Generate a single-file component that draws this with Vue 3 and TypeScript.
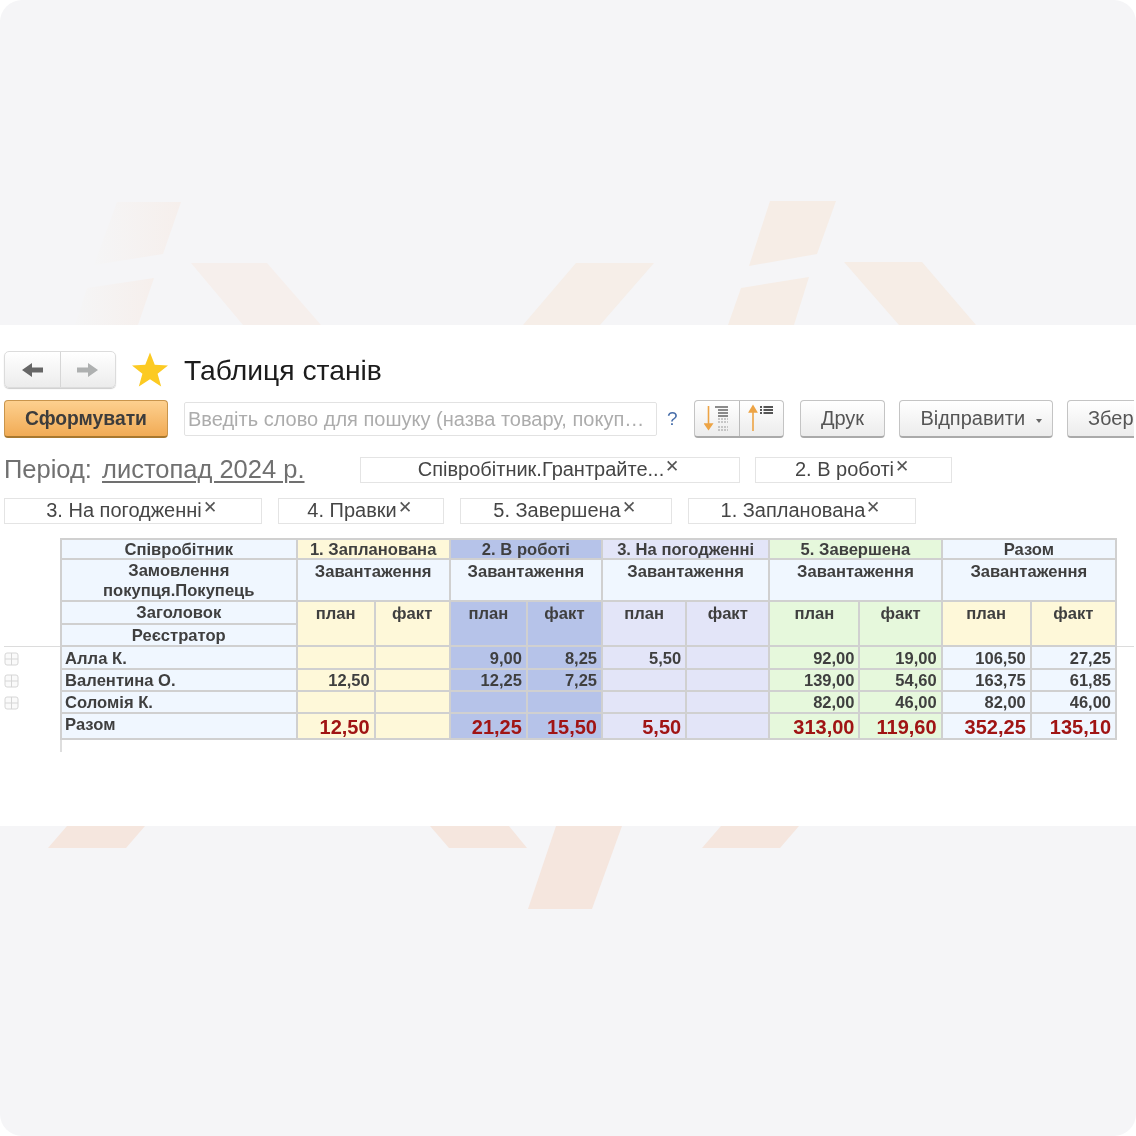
<script setup lang="ts">
const backShapes: { points: string; fill: string }[] = [
  { points: '117,202 181,202 163,254 94,265', fill: 'url(#fade)' },
  { points: '87,288 154,278 138,325 75,325', fill: 'url(#fade)' },
  { points: '191,263 267,263 321,325 243,325', fill: '#f6efec' },
  { points: '576,263 654,263 600,325 523,325', fill: '#f6eee8' },
  { points: '770,201 836,201 817,254 749,266', fill: '#f6ede6' },
  { points: '741,288 809,277 794,325 728,325', fill: '#f6ede6' },
  { points: '844,262 922,262 976,325 899,325', fill: '#f6ede6' },
  { points: '67,826 145,826 126,848 48,848', fill: '#f5e6de' },
  { points: '430,826 509,826 527,848 449,848', fill: '#f5e6de' },
  { points: '556,826 622,826 592,909 528,909', fill: '#f5e6de' },
  { points: '721,826 799,826 780,848 702,848', fill: '#f5e6de' },
]

const tagsTop = ['Співробітник.Грантрайте...', '2. В роботі']
const tagsBottom = ['3. На погодженні', '4. Правки', '5. Завершена', '1. Запланована']

const groups = [
  { title: '1. Запланована', tone: 'yellow' },
  { title: '2. В роботі', tone: 'blue' },
  { title: '3. На погодженні', tone: 'lilac' },
  { title: '5. Завершена', tone: 'green' },
  { title: 'Разом', tone: 'sky' },
]

const widths = [60, 237, 78, 75, 77, 75, 84, 83, 90, 82, 89, 85]
const tones = ['yellow', 'yellow', 'blue', 'blue', 'lilac', 'lilac', 'green', 'green', 'sky', 'sky']
const headTones = ['yellow', 'blue', 'lilac', 'green', 'yellow']

const rows = [
  { name: 'Алла К.', values: ['', '', '9,00', '8,25', '5,50', '', '92,00', '19,00', '106,50', '27,25'] },
  { name: 'Валентина О.', values: ['12,50', '', '12,25', '7,25', '', '', '139,00', '54,60', '163,75', '61,85'] },
  { name: 'Соломія К.', values: ['', '', '', '', '', '', '82,00', '46,00', '82,00', '46,00'] },
]
const totals = ['12,50', '', '21,25', '15,50', '5,50', '', '313,00', '119,60', '352,25', '135,10']
</script>

<template>
  <main class="page">
    <svg class="backdrop" width="1136" height="1136" viewBox="0 0 1136 1136" aria-hidden="true">
      <defs>
        <linearGradient id="fade" x1="0" y1="0" x2="1" y2="0">
          <stop offset="0" stop-color="#f5f5f6" />
          <stop offset="1" stop-color="#f6efec" />
        </linearGradient>
      </defs>
      <polygon v-for="shape in backShapes" :key="shape.points" :points="shape.points" :fill="shape.fill" />
    </svg>

    <section class="band">
      <div class="shot">
        <header class="title-row">
          <div class="nav">
            <button class="nav-btn">
              <svg width="21" height="14" viewBox="0 0 21 14"><path d="M0 7 10 0v4.500h11v5H10V14z" fill="#666" /></svg>
            </button>
            <button class="nav-btn">
              <svg width="21" height="14" viewBox="0 0 21 14"><path d="M21 7 11 0v4.500H0v5h11V14z" fill="#aeb0b0" /></svg>
            </button>
          </div>
          <svg class="star" width="36" height="35" viewBox="0 0 38 36"><path d="m19 0 5 13 14 .7-11 8.800 3.800 13.500L19 28.200 7.200 36 11 22.500 0 13.700 14 13z" fill="#fcca22" /></svg>
          <h1 class="title">Таблиця станів</h1>
        </header>

        <div class="toolbar">
          <button class="btn primary">Сформувати</button>
          <div class="search">Введіть слово для пошуку (назва товару, покуп…</div>
          <span class="help">?</span>
          <div class="sort-group">
            <button class="sort-btn">
              <svg width="26" height="30" viewBox="0 0 26 30">
                <path d="M4.500 3v22M1 21l3.500 5L8 21z" stroke="#eda445" stroke-width="1.600" fill="#eda445" />
                <path d="M11 4h13M14 7h10M14 10h10M14 13h10" stroke="#666" stroke-width="1.500" />
                <path d="M14 16h10M14 19h10M14 24h10M14 27h10" stroke="#999" stroke-width="1.200" stroke-dasharray="2 1" />
              </svg>
            </button>
            <button class="sort-btn">
              <svg width="26" height="30" viewBox="0 0 26 30">
                <path d="M5 28V5M1.500 9 5 3l3.500 6z" stroke="#eda445" stroke-width="1.600" fill="#eda445" />
                <path d="M12 4h2M12 7h2M12 10h2" stroke="#555" stroke-width="1.800" />
                <path d="M15.500 4H25M15.500 7H25M15.500 10H25" stroke="#555" stroke-width="1.800" />
              </svg>
            </button>
          </div>
          <button class="btn print">Друк</button>
          <button class="btn send">Відправити <span class="caret"></span></button>
          <button class="btn save">Зберегти</button>
        </div>

        <div class="filters first">
          <div class="period">Період: <a class="period-link">листопад 2024 р.</a></div>
          <div v-for="(tag, i) in tagsTop" :key="tag" class="tag" :class="'top-' + i">
            {{ tag }}<span class="close">✕</span>
          </div>
        </div>

        <div class="filters second">
          <div v-for="(tag, i) in tagsBottom" :key="tag" class="tag" :class="'bottom-' + i">
            {{ tag }}<span class="close">✕</span>
          </div>
        </div>

        <div class="table-wrap">
          <div class="hline"></div>
          <table class="report">
            <colgroup>
              <col v-for="(w, i) in widths" :key="i" :style="{ width: w + 'px' }" />
            </colgroup>
            <tbody>
              <tr class="r-22 top">
                <td class="gutter" rowspan="4"></td>
                <th class="sky first-col">Співробітник</th>
                <th v-for="g in groups" :key="g.title" colspan="2" :class="g.tone">{{ g.title }}</th>
              </tr>
              <tr class="r-42">
                <th class="sky first-col two-line">Замовлення<br />покупця.Покупець</th>
                <th v-for="g in groups" :key="g.title" colspan="2" class="sky load">Завантаження</th>
              </tr>
              <tr class="r-23">
                <th class="sky first-col">Заголовок</th>
                <template v-for="tone in headTones" :key="tone">
                  <th rowspan="2" class="measure" :class="tone">план</th>
                  <th rowspan="2" class="measure" :class="tone">факт</th>
                </template>
              </tr>
              <tr class="r-22">
                <th class="sky first-col">Реєстратор</th>
              </tr>
              <tr v-for="(row, r) in rows" :key="row.name" :class="r === 0 ? 'r-23' : 'r-22'">
                <td class="gutter expander">
                  <svg width="15" height="14" viewBox="0 0 15 14">
                    <rect x="1" y="1" width="13" height="12" rx="2" fill="#fafafa" stroke="#d6d6d6" />
                    <path d="M7.500 1v12M1 7h13" stroke="#d6d6d6" />
                  </svg>
                </td>
                <td class="sky first-col name">{{ row.name }}</td>
                <td v-for="(v, c) in row.values" :key="c" class="num" :class="tones[c]">{{ v }}</td>
              </tr>
              <tr class="r-26">
                <td class="gutter"></td>
                <td class="sky first-col name total-name">Разом</td>
                <td v-for="(v, c) in totals" :key="c" class="num total" :class="tones[c]">{{ v }}</td>
              </tr>
              <tr class="r-12">
                <td class="gutter"></td>
                <td class="stub" colspan="11"></td>
              </tr>
            </tbody>
          </table>
        </div>
      </div>
    </section>
  </main>
</template>

<style>
html,
body {
  background: #ffffff;
}
</style>

<style scoped>
.page {
  position: relative;
  width: 1136px;
  height: 1136px;
  padding-top: 325px;
  box-sizing: border-box;
  background: #f5f5f7;
  border-radius: 22px;
  overflow: hidden;
  font-family: "Liberation Sans", Arial, sans-serif;
}

.backdrop {
  position: absolute;
  left: 0;
  top: 0;
}

.band {
  position: relative;
  height: 501px;
  background: #fff;
}

.shot {
  width: 1134px;
  height: 501px;
  overflow: hidden;
  padding: 26px 0 0 4px;
  box-sizing: border-box;
  filter: blur(0.35px);
}

.title-row {
  display: flex;
  align-items: center;
  height: 37px;
}

.nav {
  display: flex;
  width: 112px;
  height: 37px;
  border: 1px solid #dcdcdc;
  border-radius: 5px;
  box-sizing: border-box;
  background: linear-gradient(#ffffff, #ececec);
  box-shadow: 0 1px 1px #ccc;
}

.nav-btn {
  flex: 1;
  display: flex;
  align-items: center;
  justify-content: center;
  padding: 0;
  border: 0;
  background: none;
}

.nav-btn + .nav-btn {
  border-left: 1px solid #d6d6d6;
}

.star {
  margin-left: 16px;
}

.title {
  margin: 2px 0 0 16px;
  font-size: 28.300px;
  font-weight: 400;
  color: #1c1c1c;
}

.toolbar {
  display: flex;
  align-items: center;
  height: 38px;
  margin-top: 12px;
}

.btn {
  height: 38px;
  padding: 0;
  border: 1px solid #c4c4c4;
  border-bottom: 2px solid #aaa;
  border-radius: 4px;
  background: linear-gradient(#ffffff, #ececec);
  box-sizing: border-box;
  font: 400 20px "Liberation Sans", Arial, sans-serif;
  color: #555;
  flex: none;
}

.primary {
  width: 164px;
  border-color: #c9954c;
  border-bottom-color: #a8782f;
  background: linear-gradient(#fdd08f, #f1ab55);
  font-size: 19.300px;
  font-weight: 700;
  color: #3c3c3c;
}

.search {
  flex: none;
  width: 473px;
  height: 34px;
  margin-left: 16px;
  padding-left: 3px;
  border: 1px solid #e2e2e2;
  border-radius: 2px;
  box-sizing: border-box;
  font-size: 20px;
  line-height: 32px;
  color: #acacac;
  white-space: nowrap;
  overflow: hidden;
}

.help {
  flex: none;
  width: 37px;
  padding-left: 10px;
  box-sizing: border-box;
  font-size: 19px;
  color: #4a70ab;
}

.sort-group {
  flex: none;
  display: flex;
  width: 90px;
  height: 38px;
  border: 1px solid #c4c4c4;
  border-bottom: 2px solid #aaa;
  border-radius: 4px;
  box-sizing: border-box;
  background: linear-gradient(#ffffff, #ececec);
}

.sort-btn {
  flex: 1;
  display: flex;
  justify-content: center;
  padding: 2px 0 0;
  border: 0;
  background: none;
}

.sort-btn + .sort-btn {
  border-left: 1px solid #bbb;
}

.print {
  width: 85px;
  margin-left: 16px;
}

.send {
  width: 154px;
  margin-left: 14px;
  padding-left: 10px;
}

.caret {
  display: inline-block;
  margin-left: 5px;
  vertical-align: 2px;
  border: 3.500px solid transparent;
  border-top: 4px solid #666;
  border-bottom: 0;
}

.save {
  width: 140px;
  margin-left: 14px;
  text-align: left;
  padding-left: 20px;
}

.filters {
  display: flex;
  height: 26px;
}

.first {
  margin-top: 19px;
}

.second {
  margin-top: 15px;
  gap: 16px;
}

.period {
  width: 356px;
  font-size: 25.500px;
  line-height: 25px;
  color: #707070;
  white-space: nowrap;
}

.period-link {
  margin-left: 3px;
  text-decoration: underline;
  text-underline-offset: 3px;
  text-decoration-thickness: 1.500px;
}

.tag {
  display: flex;
  align-items: center;
  justify-content: center;
  height: 26px;
  padding: 0 3px 2px 0;
  border: 1px solid #e4e4e4;
  box-sizing: border-box;
  font-size: 20px;
  color: #454545;
  white-space: pre;
}

.top-0 {
  width: 380px;
}

.top-1 {
  width: 197px;
  margin-left: 15px;
}

.bottom-0 {
  width: 258px;
}

.bottom-1 {
  width: 166px;
}

.bottom-2 {
  width: 212px;
}

.bottom-3 {
  width: 228px;
}

.close {
  margin: -4px 0 0 1px;
  font-size: 17px;
  line-height: 16px;
  color: #555;
}

.table-wrap {
  position: relative;
  margin: 14px 0 0 -4px;
}

.hline {
  position: absolute;
  left: 4px;
  right: 0;
  top: 108px;
  height: 1px;
  background: #dcdcdc;
}

.report {
  position: relative;
  width: 1117px;
  table-layout: fixed;
  border-collapse: separate;
  border-spacing: 0;
}

.report th,
.report td {
  padding: 0;
  box-sizing: border-box;
  border-right: 2px solid #d0d0d0;
  border-bottom: 2px solid #d0d0d0;
  font-size: 16.600px;
  line-height: 17px;
  font-weight: 700;
  color: #3f3f3f;
  text-align: center;
  white-space: nowrap;
}

.report .top th {
  border-top: 2px solid #d0d0d0;
}

.report td.gutter {
  border: 0;
  background: none;
}

.expander {
  text-align: left;
  vertical-align: middle;
}

.expander svg {
  display: block;
  margin-left: 4px;
}

.report .first-col {
  border-left: 2px solid #d0d0d0;
}

.report th.two-line {
  padding-top: 1px;
  line-height: 19.500px;
}

.r-42 {
  height: 42px;
}

.r-23 {
  height: 23px;
}

.r-22 {
  height: 22px;
}

.r-26 {
  height: 26px;
}

.r-12 {
  height: 12px;
}

.yellow {
  background: #fef8d9;
}

.blue {
  background: #b6c3e9;
}

.lilac {
  background: #e3e5f8;
}

.green {
  background: #e6f8dc;
}

.sky {
  background: #f0f7ff;
}

.report th.load,
.report th.measure {
  vertical-align: top;
  padding-top: 3px;
}

.report td.name {
  padding-top: 1px;
  padding-left: 3px;
  text-align: left;
}

.report td.num {
  padding-top: 1px;
  padding-right: 4px;
  font-size: 16.500px;
  text-align: right;
}

.report td.total {
  padding-top: 2px;
  font-size: 20px;
  color: #a01414;
}

.report td.total-name {
  vertical-align: top;
  padding-top: 2px;
}

.report td.stub {
  border: 0;
  border-left: 2px solid #dedede;
  background: none;
}
</style>
